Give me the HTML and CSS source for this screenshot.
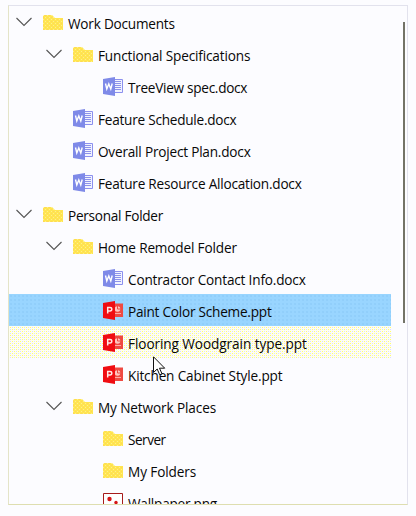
FILE: index.html
```html
<!DOCTYPE html>
<html lang="en"><head><meta charset="utf-8"><title>Tree view</title><link rel="stylesheet" href="styles.css"></head>
<body>
<svg width="0" height="0" class="defs">
<defs>
<pattern id="grain" width="4" height="4" patternUnits="userSpaceOnUse"><rect width="4" height="4" fill="#ffe650"/><path d="M0 0h1v1H0zM2 2h1v1H2z" fill="#ffd35c"/><path d="M2 0h1v1H2zM0 2h1v1H0z" fill="#fff08a"/></pattern>
<symbol id="chev" viewBox="0 0 16 10"><path d="M.5 1l7.500 7.500L15.500 1" fill="none" stroke="#555" stroke-width="1.100"/></symbol>
<symbol id="folder" viewBox="0 0 20 20"><path d="M0 3l1-1h8l3 3h8v12H0z" fill="url(#grain)"/></symbol>
<symbol id="word" viewBox="0 0 20 20"><path d="M10.500 2.500h9v13h-9z" fill="#f1f3ff" stroke="#8c90ee"/><path d="M12 4.500h6M12 6.500h6M12 8.500h6M12 10.500h6M12 12.500h6" stroke="#8c92ea"/><path d="M0 2L12 0v19L0 17z" fill="#7f8ae8"/><path d="M2.500 6.500l1.300 5.500 2-5 2 5L9.200 6.500" fill="none" stroke="#fff" stroke-width="1.400"/></symbol>
<symbol id="ppt" viewBox="0 0 20 20"><path d="M11 2.500h9v13.500h-9z" fill="#ee4a42"/><circle cx="14.500" cy="8" r="2.800" fill="#ffc5c0"/><path d="M14.500 5v3H18" fill="none" stroke="#ee4a42"/><path d="M12 12.500h6" stroke="#ffaaa4"/><path d="M0 2L12 0v19L0 17z" fill="#f00d12"/><path d="M4.700 12.500V6.500H7q1.800 0 1.800 1.700T7 9.900H4.700" fill="none" stroke="#ffe8e5" stroke-width="1.500"/></symbol>
<symbol id="image" viewBox="0 0 20 20"><path d="M.5.5h19v19H.5z" fill="#fff" stroke="#a61b1b"/><circle cx="6.500" cy="6" r="2.200" fill="#d51515"/><circle cx="13" cy="9.500" r="1.700" fill="#d51515"/><path d="M3 18l5-4 3 2 2-3 5 5z" fill="#d51515"/></symbol>
</defs></svg>
<main class="tree" id="tree"></main>
<div class="scrollbar"></div>
<svg class="cursor" viewBox="0 0 13 20"><path d="M.5.8v15.700l3.700-3.500 2.500 5.800 2.300-1-2.500-5.600h5.200z" fill="#fff" stroke="#111"/></svg>
<script src="tree.js"></script>
</body></html>
```
FILE: styles.css
```css
body{margin:0;width:416px;height:516px;overflow:hidden;background:#fcfcff;position:relative;color:#080808;font:13.6px/32px "Open Sans","Noto Sans",sans-serif}
.defs{position:absolute}
.tree{box-sizing:border-box;width:400px;height:500px;margin:5px 0 0 8px;overflow:hidden;border:1px solid #e2e2ed;border-left-color:#e4e4c8;border-bottom-color:#dedeb0}
.row{display:flex;align-items:center;box-sizing:border-box;width:382px;height:32px;padding-left:7px;white-space:nowrap}
.level-1{padding-left:37px}
.level-2{padding-left:67px}
.row.selected{background-color:#99d5ff;background-image:radial-gradient(circle,#88c8f5 .6px,transparent .8px);background-size:4px 4px}
.row.hover{background:conic-gradient(from 90deg at 3px 3px,#ffff70 25%,transparent 0) 0 0/4px 4px,conic-gradient(from 90deg at 3px 3px,#ffff70 25%,transparent 0) 2px 2px/4px 4px,conic-gradient(from 90deg at 3px 3px,#dcdcff 25%,transparent 0) 2px 0/4px 4px,conic-gradient(from 90deg at 3px 3px,#dcdcff 25%,transparent 0) 0 2px/4px 4px,#fffff0}
.chevron{width:16px;height:10px;flex:none;margin-right:11px}
.chevron.empty{visibility:hidden}
.icon{width:20px;height:20px;flex:none;margin:2px 5px 0 0}
.label{display:block;position:relative;top:1.500px}
.scrollbar{position:absolute;left:403px;top:22px;width:2px;height:301px;background:#737367}
.cursor{position:absolute;left:153px;top:356px;width:13px;height:20px}
```
FILE: tree.js
```js
const rows = [
  [0,1,'folder','Work Documents',107],
  [1,1,'folder','Functional Specifications',152],
  [2,0,'word','TreeView spec.docx',119],
  [1,0,'word','Feature Schedule.docx',138],
  [1,0,'word','Overall Project Plan.docx',153],
  [1,0,'word','Feature Resource Allocation.docx',204],
  [0,1,'folder','Personal Folder',95],
  [1,1,'folder','Home Remodel Folder',139],
  [2,0,'word','Contractor Contact Info.docx',178],
  [2,0,'ppt','Paint Color Scheme.ppt',144,'selected'],
  [2,0,'ppt','Flooring Woodgrain type.ppt',179,'hover'],
  [2,0,'ppt','Kitchen Cabinet Style.ppt',154],
  [1,1,'folder','My Network Places',118],
  [2,0,'folder','Server',38],
  [2,0,'folder','My Folders',68],
  [2,0,'image','Wallpaper.png',89]
];
const tree = document.getElementById('tree');
for (const [level, open, icon, text, width, state = ''] of rows) {
  const row = document.createElement('div');
  row.className = `row level-${level} ${state}`;
  row.innerHTML = `<svg class="chevron ${open ? '' : 'empty'}"><use href="#chev"/></svg><svg class="icon"><use href="#${icon}"/></svg><span class="label">${text}</span>`;
  tree.append(row);
  const label = row.lastChild;
  label.style.letterSpacing = (width - label.offsetWidth) / text.length + 'px';
}
```
